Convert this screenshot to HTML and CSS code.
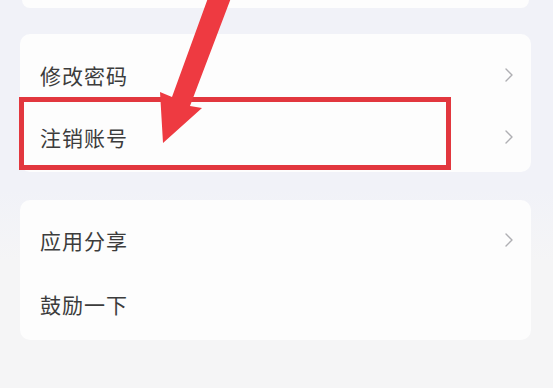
FILE: index.html
```html
<!DOCTYPE html>
<html lang="zh-CN">
<head>
<meta charset="utf-8">
<title>设置</title>
<link rel="stylesheet" href="styles.css">
</head>
<body>
<div class="page">
  <div class="card card-top"></div>

  <div class="card card-account">
    <div class="row">
      <span class="label">修改密码</span>
      <svg class="chev" viewBox="0 0 8 14" width="8" height="14"><path d="M1 1 L7 7 L1 13" fill="none" stroke="#afafb3" stroke-width="1.4" stroke-linecap="round" stroke-linejoin="round"/></svg>
    </div>
    <div class="row">
      <span class="label">注销账号</span>
      <svg class="chev" viewBox="0 0 8 14" width="8" height="14"><path d="M1 1 L7 7 L1 13" fill="none" stroke="#afafb3" stroke-width="1.4" stroke-linecap="round" stroke-linejoin="round"/></svg>
    </div>
  </div>

  <div class="card card-app">
    <div class="row row-tall">
      <span class="label">应用分享</span>
      <svg class="chev" viewBox="0 0 8 14" width="8" height="14"><path d="M1 1 L7 7 L1 13" fill="none" stroke="#afafb3" stroke-width="1.4" stroke-linecap="round" stroke-linejoin="round"/></svg>
    </div>
    <div class="row row-tall">
      <span class="label">鼓励一下</span>
    </div>
  </div>

  <div class="highlight"></div>
  <svg class="arrow" viewBox="0 0 553 388" width="553" height="388">
    <polygon points="208,-2 231,-2 190,106 202,108 163,143 160,92 172,97" fill="#ee3a41"/>
  </svg>
</div>
</body>
</html>
```

FILE: styles.css
```css
* { box-sizing: border-box; }

html, body {
  margin: 0;
  padding: 0;
}

body {
  width: 553px;
  height: 388px;
  overflow: hidden;
  background: #f5f5f7;
  font-family: "Noto Sans CJK SC", "Noto Sans", sans-serif;
}

.page {
  position: relative;
  width: 553px;
  height: 388px;
  padding: 0 22px 0 20px;
  display: flex;
  flex-direction: column;
  background: linear-gradient(#f1f2f8 0, #f1f2f8 190px, #f5f5f6 260px);
}

.card {
  background: #fdfdfd;
  border-radius: 10px;
}

.card-top {
  height: 8px;
  margin: 0 2px;
  border-radius: 0 0 10px 10px;
}

.card-account {
  margin-top: 26px;
  padding: 10px 0 4px;
}

.card-app {
  margin-top: 28px;
  padding: 8px 0 4px;
}

.row {
  height: 62px;
  display: flex;
  align-items: center;
  justify-content: space-between;
  padding: 0 18px 0 20px;
}

.row-tall {
  height: 64px;
}

.label {
  font-size: 21px;
  color: #3c3c3c;
  letter-spacing: 1px;
}

.chev {
  flex: none;
  display: block;
}

.highlight {
  position: absolute;
  left: 19px;
  top: 97px;
  width: 432px;
  height: 73px;
  border: 5px solid #e2373e;
}

.arrow {
  position: absolute;
  left: 0;
  top: 0;
}
```
